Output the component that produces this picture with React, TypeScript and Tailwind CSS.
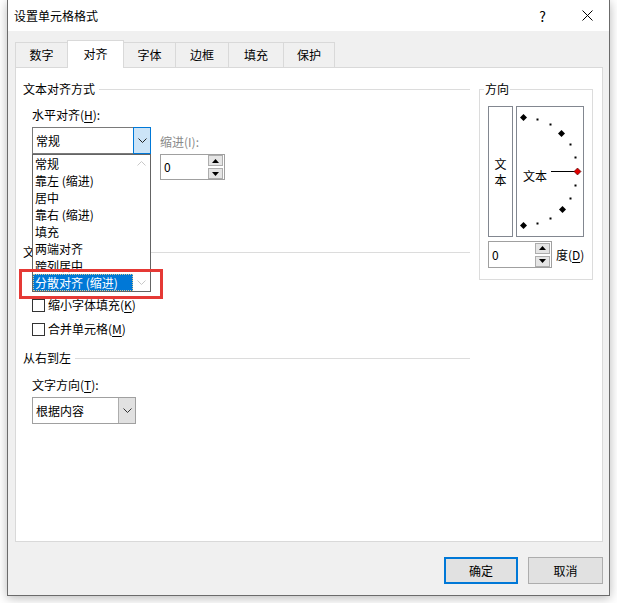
import React from "react";

function Chevron({ color = "#333", up = false }: { color?: string; up?: boolean }) {
  return (
    <svg width="9" height="5" viewBox="0 0 9 5" className="block">
      <path
        d={up ? "M0.5 4.5 L4.5 0.5 L8.5 4.5" : "M0.5 0.5 L4.5 4.5 L8.5 0.5"}
        fill="none"
        stroke={color}
        strokeWidth="1"
      />
    </svg>
  );
}

function Tri({ up }: { up?: boolean }) {
  return (
    <svg width="7" height="4" viewBox="0 0 7 4" className="block">
      <path d={up ? "M0 4 L3.5 0 L7 4 Z" : "M0 0 L3.5 4 L7 0 Z"} fill="#000" />
    </svg>
  );
}

function GroupHeader({ children }: { children: React.ReactNode }) {
  return (
    <div className="flex h-[16px] items-center">
      <span className="leading-[16px] whitespace-nowrap">{children}</span>
      <div className="ml-[4px] h-px flex-1 bg-[#dcdcdc]" />
    </div>
  );
}

function U({ children }: { children: React.ReactNode }) {
  return <span className="underline underline-offset-2">{children}</span>;
}

function Check({ label, k }: { label: string; k: string }) {
  return (
    <div className="flex h-[16px] items-center pl-[9px]">
      <div className="h-[13px] w-[13px] border border-[#333] bg-white" />
      <span className="ml-[3px] leading-[16px] whitespace-nowrap">
        {label}(<U>{k}</U>)
      </span>
    </div>
  );
}

function Spin({ w, h }: { w: string; h: string }) {
  return (
    <div className={`flex items-center border border-[#a0a0a0] bg-white ${w} ${h}`}>
      <span className="flex-1 pl-[3px] leading-[16px]">0</span>
      <div className="mr-[1px] flex flex-col gap-[2px]">
        <div className="flex h-[11px] w-[15px] items-center justify-center border border-[#adadad] bg-[#e5e5e5]">
          <Tri up />
        </div>
        <div className="flex h-[11px] w-[15px] items-center justify-center border border-[#adadad] bg-[#e5e5e5]">
          <Tri />
        </div>
      </div>
    </div>
  );
}

const tabs = ["数字", "对齐", "字体", "边框", "填充", "保护"];
const tabW = ["w-[52px]", "w-[57px]", "w-[51px]", "w-[53px]", "w-[55px]", "w-[52px]"];
const listItems = ["常规", "靠左 (缩进)", "居中", "靠右 (缩进)", "填充", "两端对齐", "跨列居中"];

function Dial() {
  const big = [
    [6, 10],
    [44, 26],
    [45, 102],
    [6, 118],
  ];
  const small = [
    [20, 12],
    [33, 17],
    [53, 37],
    [58, 50],
    [58, 78],
    [53, 91],
    [33, 111],
    [20, 116],
  ];
  const d = (x: number, y: number, r: number) =>
    `${x},${y - r} ${x + r},${y} ${x},${y + r} ${x - r},${y}`;
  return (
    <svg width="66" height="129" viewBox="0 0 66 129" className="block">
      {big.map(([x, y], i) => (
        <polygon key={i} points={d(x + 0.5, y + 0.5, 3.5)} fill="#000" />
      ))}
      {small.map(([x, y], i) => (
        <rect key={i} x={x - 0.5} y={y - 0.5} width="2" height="2" fill="#000" />
      ))}
      <line x1="34" y1="64.5" x2="60" y2="64.5" stroke="#000" strokeWidth="1" />
      <polygon points={d(60.5, 64.5, 3.5)} fill="#e00000" stroke="#400" strokeWidth="0.6" />
      <text
        x="18"
        y="74"
        textAnchor="middle"
        fontSize="12"
        fontFamily="'Noto Sans CJK SC', 'Noto Sans', sans-serif"
        fill="#000"
      >
        文本
      </text>
    </svg>
  );
}

export default function App() {
  return (
    <div className="h-[603px] w-[617px] overflow-hidden bg-white font-['Noto_Sans_CJK_SC','Noto_Sans',sans-serif] text-[12px] text-black">
      <div className="ml-[7px] flex h-[596px] w-[603px] flex-col border-x border-b border-[#6b6b6b] bg-[#f0f0f0] shadow-[0_2px_10px_rgba(0,0,0,0.28)]">
        {/* Title bar */}
        <div className="flex h-[31px] shrink-0 items-center bg-white pl-[6px]">
          <span className="leading-[16px]">设置单元格格式</span>
          <span className="ml-auto mr-[36px] text-[14px] leading-[16px]">?</span>
          <svg width="11" height="11" viewBox="0 0 11 11" className="mr-[16px] block">
            <path d="M0.5 0.5 L10.5 10.5 M10.5 0.5 L0.5 10.5" stroke="#000" strokeWidth="1" />
          </svg>
        </div>

        {/* Body */}
        <div className="flex flex-1 flex-col pl-[7px] pr-[6px] pt-[9px]">
          {/* Tabs */}
          <div className="-mb-px flex h-[28px] items-end">
            {tabs.map((t, i) => {
              const active = i === 1;
              const cls = [
                "flex items-center justify-center leading-[16px]",
                tabW[i],
                active
                  ? "relative z-10 h-[28px] border-x border-t border-[#d9d9d9] bg-white pb-[1px]"
                  : "h-[26px] border-t border-[#d9d9d9] bg-[#f0f0f0] pb-[1px]",
                !active && i !== 2 ? "border-l" : "",
                i === tabs.length - 1 ? "border-r" : "",
              ].join(" ");
              return (
                <div key={t} className={cls}>
                  {t}
                </div>
              );
            })}
          </div>

          {/* Panel */}
          <div className="relative flex h-[475px] border border-[#d9d9d9] bg-white pl-[7px] pt-[13px]">
            {/* Left column */}
            <div className="flex w-[447px] flex-col">
              <GroupHeader>文本对齐方式</GroupHeader>
              <div className="ml-[9px] mt-[10px] h-[16px] leading-[16px]">
                水平对齐(<U>H</U>):
              </div>
              <div className="ml-[9px] mt-[4px] flex items-start">
                <div className="flex h-[27px] w-[119px] items-center border border-[#7a7a7a] bg-white">
                  <span className="flex-1 pl-[3px] leading-[16px]">常规</span>
                  <div className="-my-px -mr-px flex w-[18px] items-center justify-center self-stretch border border-[#0078d7] bg-[#cce4f7]">
                    <Chevron color="#222" />
                  </div>
                </div>
                <div className="ml-[9px] mt-[7px] flex flex-col">
                  <div className="h-[16px] leading-[16px] text-[#8a8a8a]">缩进(I):</div>
                  <div className="mt-[4px]">
                    <Spin w="w-[65px]" h="h-[26px]" />
                  </div>
                </div>
              </div>

              <div className="mt-[64px]">
                <GroupHeader>文本控制</GroupHeader>
              </div>
              <div className="mt-[13px] h-[16px]" />
              <div className="mt-[8px]">
                <Check label="缩小字体填充" k="K" />
              </div>
              <div className="mt-[8px]">
                <Check label="合并单元格" k="M" />
              </div>

              <div className="mt-[13px]">
                <GroupHeader>从右到左</GroupHeader>
              </div>
              <div className="ml-[9px] mt-[11px] h-[16px] leading-[16px]">
                文字方向(<U>T</U>):
              </div>
              <div className="ml-[9px] mt-[4px] flex h-[27px] w-[104px] items-center border border-[#a0a0a0] bg-white">
                <span className="flex-1 pl-[3px] leading-[16px]">根据内容</span>
                <div className="flex w-[17px] items-center justify-center self-stretch border-l border-[#adadad] bg-[#e1e1e1]">
                  <Chevron color="#333" />
                </div>
              </div>
            </div>

            {/* Orientation group */}
            <fieldset className="ml-[9px] w-[114px] self-start border border-[#dcdcdc]">
              <legend className="ml-[4px] px-px leading-[16px]">方向</legend>
              <div className="pb-[11px] pl-[8px] pt-[9px]">
                <div className="flex gap-[3px]">
                  <div className="flex h-[131px] w-[25px] flex-col items-center justify-center border border-[#828790] leading-[16px]">
                    <span>文</span>
                    <span>本</span>
                  </div>
                  <div className="h-[131px] w-[68px] border border-[#828790]">
                    <Dial />
                  </div>
                </div>
                <div className="mt-[4px] flex items-center">
                  <Spin w="w-[64px]" h="h-[27px]" />
                  <span className="ml-[4px] leading-[16px]">
                    度(<U>D</U>)
                  </span>
                </div>
              </div>
            </fieldset>

            {/* Dropdown list overlay */}
            <div className="absolute left-[16px] top-[86px] z-20 flex h-[138px] w-[119px] border border-[#646464] bg-white">
              <div className="flex w-[100px] flex-col">
                {listItems.map((t) => (
                  <div key={t} className="h-[17px] whitespace-nowrap pl-[2px] leading-[17px]">
                    {t}
                  </div>
                ))}
                <div className="h-[17px] whitespace-nowrap border border-dotted border-[#d8c890] bg-[#0078d7] pl-[1px] leading-[15px] text-white">
                  分散对齐 (缩进)
                </div>
              </div>
              <div className="flex flex-1 flex-col items-center justify-between py-[6px]">
                <Chevron color="#c8c8c8" up />
                <Chevron color="#c8c8c8" />
              </div>
            </div>

            {/* Red highlight box */}
            <div className="absolute left-[3px] top-[201px] z-30 h-[30px] w-[144px] border-[3px] border-[#e53935]" />
          </div>

          {/* Buttons */}
          <div className="mt-[15px] flex justify-end gap-[10px]">
            <div className="flex h-[27px] w-[74px] items-center justify-center border-2 border-[#0078d7] bg-[#e1e1e1] leading-[16px]">
              确定
            </div>
            <div className="flex h-[27px] w-[75px] items-center justify-center border border-[#adadad] bg-[#e1e1e1] leading-[16px]">
              取消
            </div>
          </div>
        </div>
      </div>
    </div>
  );
}
